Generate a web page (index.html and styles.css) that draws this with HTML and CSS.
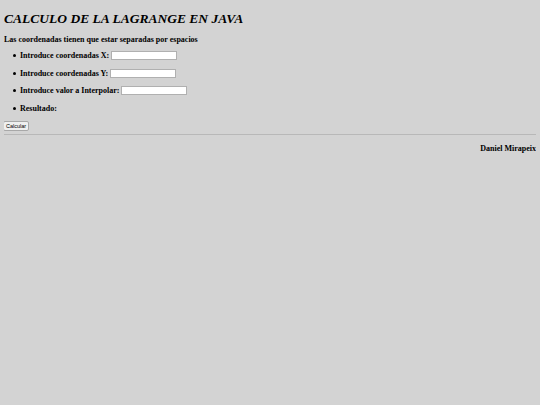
FILE: index.html
```html
<!DOCTYPE html>
<html>
<head>
<meta charset="utf-8">
<link rel="stylesheet" href="styles.css">
</head>
<body>
<h1 class="title">CALCULO DE LA LAGRANGE EN JAVA</h1>
<form class="form">
  <p class="note">Las coordenadas tienen que estar separadas por espacios</p>
  <ul class="fields">
    <li class="field"><span class="label">Introduce coordenadas X:</span> <input class="box" type="text"></li>
    <li class="field"><span class="label">Introduce coordenadas Y:</span> <input class="box" type="text"></li>
    <li class="field"><span class="label">Introduce valor a Interpolar:</span> <input class="box" type="text"></li>
    <li class="field"><span class="label">Resultado:</span></li>
  </ul>
  <button class="btn" type="button">Calcular</button>
</form>
<hr class="rule">
<p class="author">Daniel Mirapeix</p>
</body>
</html>
```
FILE: styles.css
```css
html, body {
  background: #d3d3d3;
}
body {
  margin: 4px;
  font-family: "Liberation Serif", serif;
  font-size: 8px;
  color: #000;
}
.title {
  font-size: 13.5px;
  font-style: italic;
  font-weight: bold;
  margin: 6px 0 7px;
  line-height: 17px;
}
.form {
  margin: 0;
}
.note {
  font-weight: bold;
  margin: 0 0 5px;
  line-height: 12px;
}
.fields {
  list-style: none;
  margin: 0;
  padding-left: 16px;
}
.field {
  font-weight: bold;
  height: 17.5px;
}
.field::before {
  content: "";
  display: inline-block;
  width: 3px;
  height: 3px;
  border-radius: 50%;
  background: #000;
  margin-left: -7px;
  margin-right: 4px;
  vertical-align: 1px;
}
.box {
  width: 66px;
  height: 9px;
  box-sizing: border-box;
  border: 1px solid #b0b0b0;
  background: #fff;
  padding: 0;
  margin: 0;
  vertical-align: -2px;
}
.btn {
  font-family: "Liberation Sans", Arial, sans-serif;
  font-size: 5.5px;
  padding: 1px 2px;
  border: 1px solid #a8a8a8;
  border-radius: 2px;
  background: #efefef;
  margin: 0 0 0 -1px;
  line-height: 6px;
  height: 9.5px;
}
.rule {
  margin: 3px 0 0;
  border: 0;
  border-top: 1px solid #b8b8b8;
  height: 0;
}
.author {
  text-align: right;
  font-weight: bold;
  margin: 9px 0 0;
}
```
